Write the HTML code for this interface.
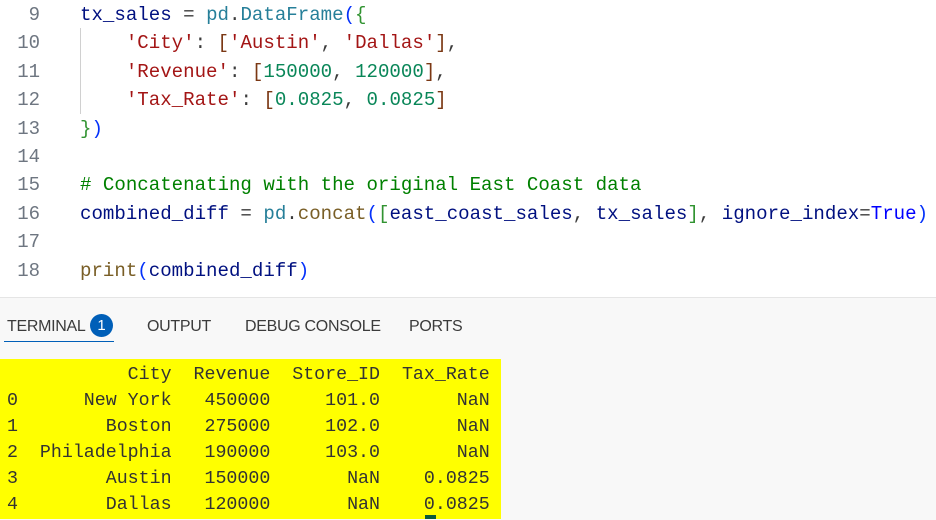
<!DOCTYPE html>
<html><head><style>
body{margin:0;width:936px;height:519px;overflow:hidden;background:#fff;position:relative;font-family:"Liberation Sans",sans-serif}
.ed{position:absolute;left:0;top:0;width:936px;height:297px;background:#fff}
.ln{position:absolute;left:0;width:40px;text-align:right;font:19px/28.4px "Liberation Mono",monospace;color:#6e7681}
.cd{position:absolute;left:80px;font:19.1px/28.4px "Liberation Mono",monospace;color:#001080;white-space:pre}
.s{color:#a31515}.n{color:#098658}.t{color:#267f99}.f{color:#795e26}.c{color:#008000}.k{color:#0000ff}.b1{color:#319331}.b2{color:#0431fa}.b3{color:#7b3814}.p{color:#3b3b3b}
.guide{position:absolute;left:80px;top:28px;width:1px;height:86px;background:#d0d0d0}
.panel{position:absolute;left:0;top:297px;width:936px;height:222px;background:#f8f8f8;border-top:1px solid #e5e5e5}
.tab{position:absolute;top:318px;font-size:16px;color:#3b3b3b;letter-spacing:-0.3px}
.term{position:absolute;left:0;top:359px;width:501px;height:160px;background:#ffff00}
.tl{position:absolute;left:7px;font:18.3px/26px "Liberation Mono",monospace;color:#333;white-space:pre}
</style></head><body>
<div class="ed">
<div class="guide"></div>
<div class="ln" style="top:1px">9</div><div class="cd" style="top:1px">tx_sales <span class="p">=</span> <span class="t">pd</span><span class="p">.</span><span class="t">DataFrame</span><span class="b2">(</span><span class="b1">{</span></div>
<div class="ln" style="top:29.4px">10</div><div class="cd" style="top:29.4px">    <span class="s">'City'</span><span class="p">:</span> <span class="b3">[</span><span class="s">'Austin'</span><span class="p">,</span> <span class="s">'Dallas'</span><span class="b3">]</span><span class="p">,</span></div>
<div class="ln" style="top:57.8px">11</div><div class="cd" style="top:57.8px">    <span class="s">'Revenue'</span><span class="p">:</span> <span class="b3">[</span><span class="n">150000</span><span class="p">,</span> <span class="n">120000</span><span class="b3">]</span><span class="p">,</span></div>
<div class="ln" style="top:86.2px">12</div><div class="cd" style="top:86.2px">    <span class="s">'Tax_Rate'</span><span class="p">:</span> <span class="b3">[</span><span class="n">0.0825</span><span class="p">,</span> <span class="n">0.0825</span><span class="b3">]</span></div>
<div class="ln" style="top:114.6px">13</div><div class="cd" style="top:114.6px"><span class="b1">}</span><span class="b2">)</span></div>
<div class="ln" style="top:143px">14</div>
<div class="ln" style="top:171.4px">15</div><div class="cd c" style="top:171.4px"># Concatenating with the original East Coast data</div>
<div class="ln" style="top:199.8px">16</div><div class="cd" style="top:199.8px">combined_diff <span class="p">=</span> <span class="t">pd</span><span class="p">.</span><span class="f">concat</span><span class="b2">(</span><span class="b1">[</span>east_coast_sales<span class="p">,</span> tx_sales<span class="b1">]</span><span class="p">,</span> ignore_index<span class="p">=</span><span class="k">True</span><span class="b2">)</span></div>
<div class="ln" style="top:228.2px">17</div>
<div class="ln" style="top:256.6px">18</div><div class="cd" style="top:256.6px"><span class="f">print</span><span class="b2">(</span>combined_diff<span class="b2">)</span></div>
</div>
<div class="panel"></div>
<div class="tab" style="left:7px">TERMINAL</div>
<div style="position:absolute;left:90px;top:314px;width:23px;height:23px;border-radius:50%;background:#005fb8;color:#fff;font-size:15px;line-height:23px;text-align:center">1</div>
<div style="position:absolute;left:4px;top:341px;width:110px;height:1px;background:#005fb8"></div>
<div class="tab" style="left:147px">OUTPUT</div>
<div class="tab" style="left:245px">DEBUG CONSOLE</div>
<div class="tab" style="left:409px">PORTS</div>
<div class="term">
<div class="tl" style="top:3px">           City  Revenue  Store_ID  Tax_Rate</div>
<div class="tl" style="top:29px">0      New York   450000     101.0       NaN</div>
<div class="tl" style="top:55px">1        Boston   275000     102.0       NaN</div>
<div class="tl" style="top:81px">2  Philadelphia   190000     103.0       NaN</div>
<div class="tl" style="top:107px">3        Austin   150000       NaN    0.0825</div>
<div class="tl" style="top:133px">4        Dallas   120000       NaN    0.0825</div>
<div style="position:absolute;left:425px;top:156px;width:11px;height:4px;background:#0a5a3a"></div>
</div>
</body></html>
